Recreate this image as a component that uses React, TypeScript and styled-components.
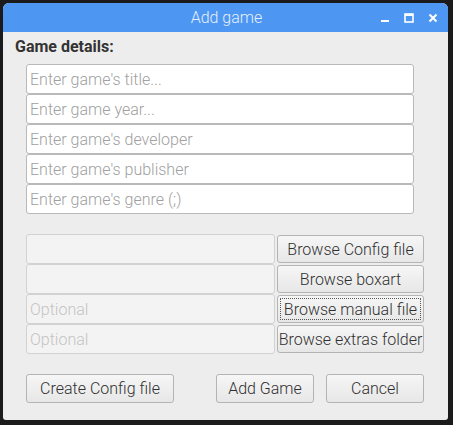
import React from "react";
import styled, { createGlobalStyle, css } from "styled-components";

const Global = createGlobalStyle`
  html, body { margin: 0; padding: 0; }
  body {
    background: #1b1b1b;
    width: 453px;
    height: 425px;
    overflow: hidden;
    font-family: Roboto, "Noto Sans", "Liberation Sans", sans-serif;
  }
  #root { padding: 3px 5px 5px 3px; }
`;

const Window = styled.div`
  width: 445px;
  height: 417px;
  background: #ededed;
  border-radius: 6px 6px 3px 3px;
  display: flex;
  flex-direction: column;
  overflow: hidden;
`;

const TitleBar = styled.div`
  height: 29px;
  background: #4d97f3;
  display: flex;
  align-items: center;
  position: relative;
`;

const Title = styled.div`
  flex: 1;
  text-align: center;
  color: #e6effc;
  font-size: 16px;
  font-weight: 300;
  padding-left: 2px;
`;

const Controls = styled.div`
  position: absolute;
  right: 9px;
  top: 0;
  height: 29px;
  display: flex;
  align-items: center;
  gap: 12px;
`;

const Ctrl = styled.svg`
  width: 12px;
  height: 12px;
  display: block;
`;

const Body = styled.div`
  flex: 1;
  display: flex;
  flex-direction: column;
  padding: 0 0 0 12px;
`;

const Label = styled.div`
  margin-top: 5px;
  line-height: 19px;
  font-size: 16px;
  font-weight: 700;
  color: #333;
`;

const Group = styled.div<{ $top: number }>`
  margin-top: ${(p) => p.$top}px;
  margin-left: 11px;
  display: flex;
  flex-direction: column;
`;

const Field = styled.div<{ $disabled?: boolean; $w?: number }>`
  box-sizing: border-box;
  height: 30px;
  width: ${(p) => p.$w ?? 388}px;
  border: 1px solid #b9b9b9;
  border-radius: 3px;
  background: #fff;
  display: flex;
  align-items: center;
  padding-left: 3px;
  font-size: 16px;
  font-weight: 300;
  color: #a0a0a0;
  white-space: nowrap;
  ${(p) =>
    p.$disabled &&
    css`
      background: #f3f3f3;
      border-color: #d2d2d2;
      color: #c4c4c4;
    `}
`;

const Row = styled.div`
  display: flex;
  align-items: center;
  gap: 2px;
  height: 30px;
`;

const Button = styled.div<{ $w: number; $h?: number; $focus?: boolean }>`
  box-sizing: border-box;
  width: ${(p) => p.$w}px;
  height: ${(p) => p.$h ?? 28}px;
  border: 1px solid #b4b4b4;
  border-radius: 3px;
  background: linear-gradient(#f6f6f6, #e7e7e7);
  display: flex;
  align-items: center;
  justify-content: center;
  font-size: 16px;
  font-weight: 300;
  color: #303030;
  white-space: nowrap;
  position: relative;
  ${(p) =>
    p.$focus &&
    css`
      &::after {
        content: "";
        position: absolute;
        inset: 2px;
        border: 1px dotted #555;
        border-radius: 1px;
      }
    `}
`;

const Footer = styled.div`
  margin-top: 20px;
  margin-left: 11px;
  display: flex;
  align-items: center;
`;

const Spacer = styled.div<{ $w: number }>`
  width: ${(p) => p.$w}px;
`;

export default function App() {
  return (
    <>
      <Global />
      <Window>
        <TitleBar>
          <Title>Add game</Title>
          <Controls>
            <Ctrl viewBox="0 0 12 12">
              <rect x="2" y="8" width="8" height="2" fill="#fff" />
            </Ctrl>
            <Ctrl viewBox="0 0 12 12">
              <rect x="2" y="2" width="8" height="8" fill="none" stroke="#fff" strokeWidth="1.6" />
              <rect x="2" y="2" width="8" height="2" fill="#fff" />
            </Ctrl>
            <Ctrl viewBox="0 0 12 12">
              <path d="M2.5 2.5 L9.5 9.5 M9.5 2.5 L2.5 9.5" stroke="#fff" strokeWidth="2" />
            </Ctrl>
          </Controls>
        </TitleBar>
        <Body>
          <Label>Game details:</Label>
          <Group $top={8}>
            <Field>Enter game's title...</Field>
            <Field>Enter game year...</Field>
            <Field>Enter game's developer</Field>
            <Field>Enter game's publisher</Field>
            <Field>Enter game's genre (;)</Field>
          </Group>
          <Group $top={20}>
            <Row>
              <Field $disabled $w={249} />
              <Button $w={147}>Browse Config file</Button>
            </Row>
            <Row>
              <Field $disabled $w={249} />
              <Button $w={147}>Browse boxart</Button>
            </Row>
            <Row>
              <Field $disabled $w={249}>Optional</Field>
              <Button $w={147} $focus>Browse manual file</Button>
            </Row>
            <Row>
              <Field $disabled $w={249}>Optional</Field>
              <Button $w={147}>Browse extras folder</Button>
            </Row>
          </Group>
          <Footer>
            <Button $w={148} $h={29}>Create Config file</Button>
            <Spacer $w={42} />
            <Button $w={98} $h={29}>Add Game</Button>
            <Spacer $w={12} />
            <Button $w={98} $h={29}>Cancel</Button>
          </Footer>
        </Body>
      </Window>
    </>
  );
}
